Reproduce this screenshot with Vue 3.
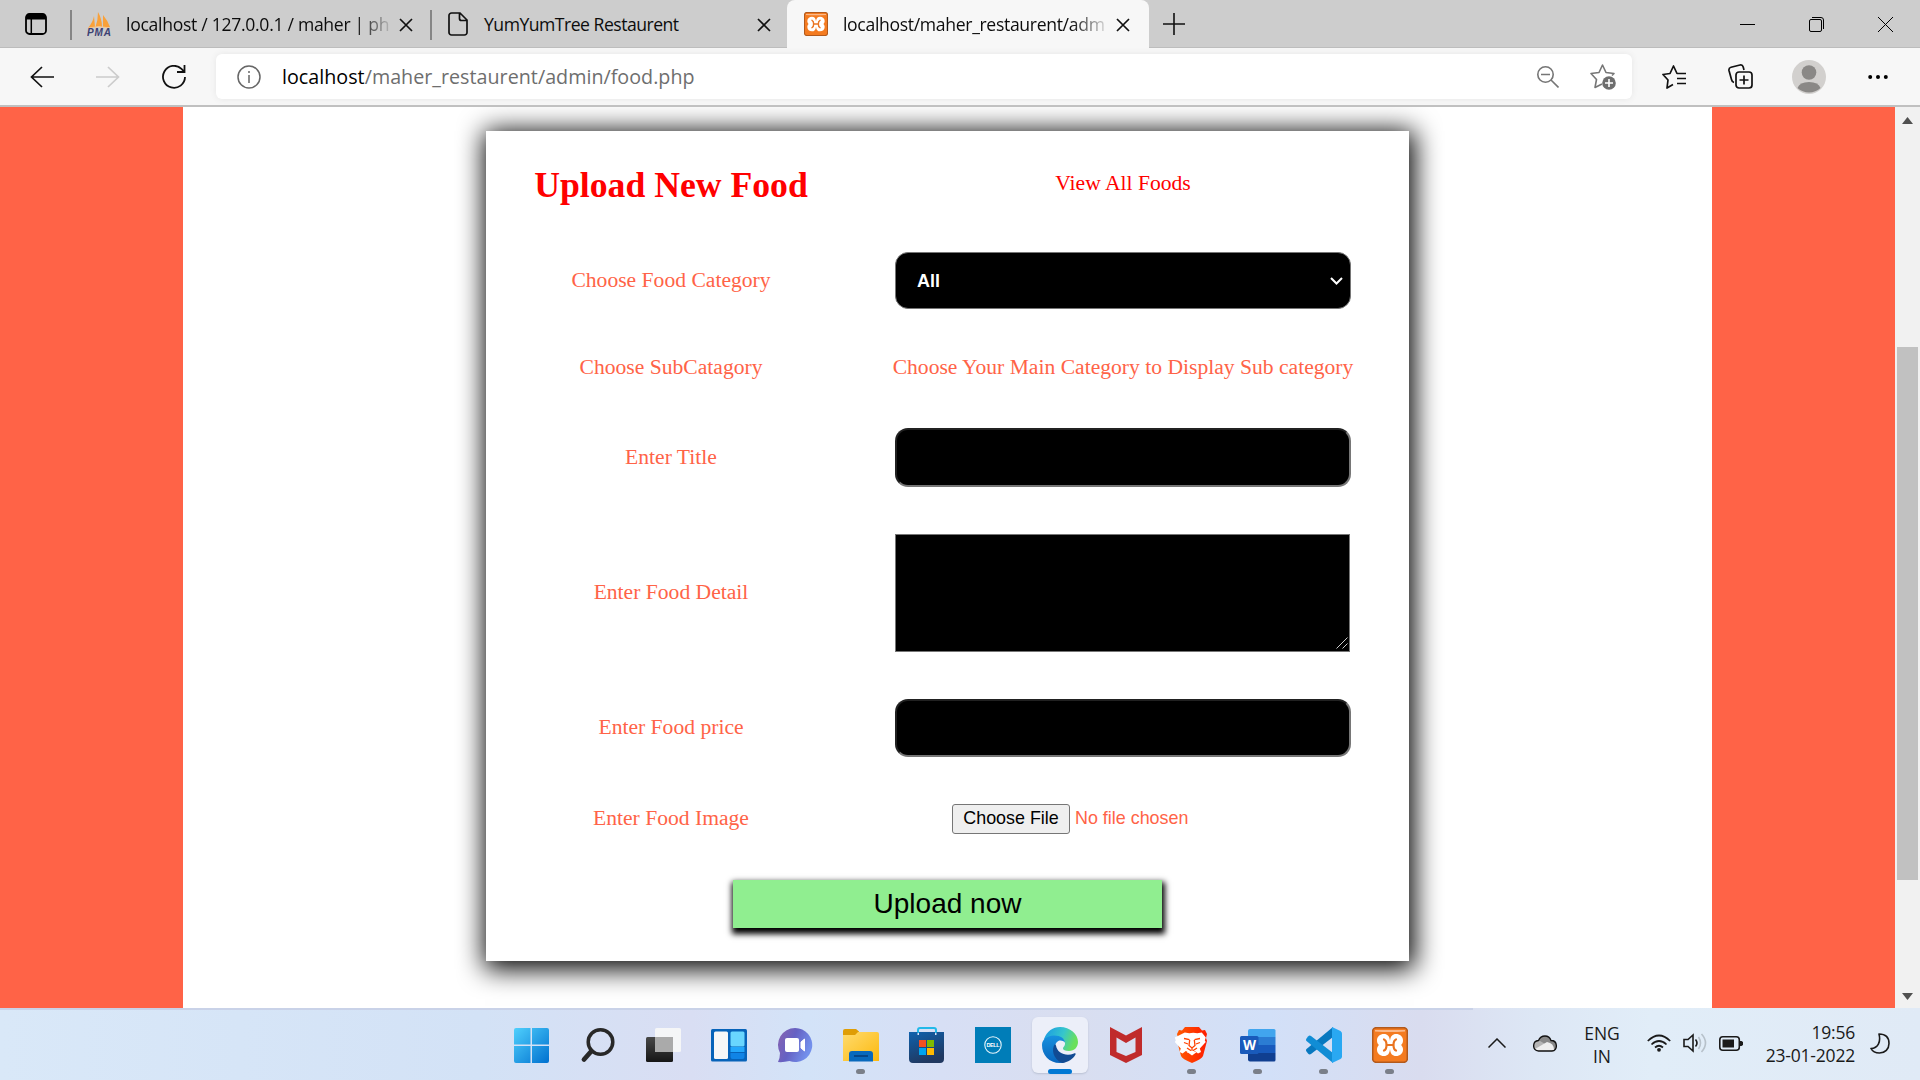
<script setup>
import { h } from 'vue'

const Cross = () => h('svg', { width: 14, height: 14, viewBox: '0 0 14 14', fill: 'none', stroke: '#111', 'stroke-width': 1.7 }, [h('path', { d: 'M1 1l12 12M13 1L1 13' })])

const Xampp = (props) => h('svg', { width: props.size, height: props.size, viewBox: '0 0 36 36' }, [
  h('rect', { x: 0.7, y: 0.7, width: 34.6, height: 34.6, rx: 3.5, fill: '#f47b20', stroke: '#b35a1c', 'stroke-width': 1.6 }),
  h('path', { d: 'M3 3h30v1.5q-15 1-30 0z', fill: '#fbb98a' }),
  h('path', {
    d: 'M18 14C17.500 9 15.500 7 12 7c-4 0-7 2.500-7 6.500 0 2 .8 3.500 2 4.500-1.200 1-2 2.500-2 4.500 0 4 3 6.500 7 6.500 3.500 0 5.500-2 6-7 .5 5 2.500 7 6 7 4 0 7-2.500 7-6.500 0-2-.8-3.500-2-4.500 1.200-1 2-2.500 2-4.500C31 9.500 28 7 24 7c-3.500 0-5.500 2-6 7z',
    fill: '#fff'
  }),
  h('path', { d: 'M12 12.500q2.500 1 2.500 5.500t-2.500 5.500M24 12.500q-2.500 1-2.500 5.500t2.500 5.500M14.500 18h7', fill: 'none', stroke: '#ea7420', 'stroke-width': 2.2, 'stroke-linecap': 'round' })
])
Xampp.props = ['size']
</script>

<template>
  <div class="screen">
    <header class="tabs">
      <div class="tab-menu">
        <svg width="22" height="22" viewBox="0 0 22 22"><rect x="1" y="1" width="20" height="20" rx="3.500" fill="none" stroke="#000" stroke-width="1.800" /><path d="M1 6.500V4a3 3 0 0 1 3-3h14a3 3 0 0 1 3 3v2.500z" /><path d="M6.300 6v15" stroke="#000" stroke-width="1.500" /></svg>
      </div>
      <div class="tab first">
        <svg class="fav" width="24" height="24" viewBox="0 0 24 24"><path d="M1 16Q6 10 7 4l1 11zM8.500 15Q11 8 11 0q4 7 4 15zM16 15V3q5 6 7 12z" fill="#f9a13a" /><path d="M1 16q11-3 22 0" stroke="#f6c58d" fill="none" /><text x="0" y="23.500" textLength="24" class="pma">PMA</text></svg>
        <span class="label pma-label">localhost / 127.0.0.1 / maher | ph</span>
        <Cross class="x" />
      </div>
      <div class="tab second">
        <svg class="fav" width="24" height="24" viewBox="0 0 24 24" fill="none" stroke="#111" stroke-width="1.700"><path d="M5.500 1H14l7 7v12.500a2.500 2.500 0 0 1-2.500 2.500h-13A2.500 2.500 0 0 1 3 20.500v-17A2.500 2.500 0 0 1 5.500 1zM13.500 1v5.500q0 2 2 2H21" /></svg>
        <span class="label yum-label">YumYumTree Restaurent</span>
        <Cross class="x" />
      </div>
      <div class="tab active">
        <Xampp class="fav" :size="24" />
        <span class="label food-label">localhost/maher_restaurent/adm</span>
        <Cross class="x" />
      </div>
      <svg class="plus" width="22" height="22" viewBox="0 0 22 22" stroke="#111" stroke-width="1.600"><path d="M11 0v22M0 11h22" /></svg>
      <div class="window-controls">
        <svg width="15" height="15" viewBox="0 0 15 15" stroke="#000"><path d="M0 7.500h15" /></svg>
        <svg width="15" height="15" viewBox="0 0 15 15" fill="none" stroke="#000"><rect x=".5" y="2.500" width="12" height="12" rx="1.500" /><path d="M3 .5h9a2.500 2.500 0 0 1 2.500 2.500v9" /></svg>
        <svg width="15" height="15" viewBox="0 0 15 15" stroke="#000"><path d="M0 0l15 15M15 0L0 15" /></svg>
      </div>
    </header>

    <nav class="toolbar">
      <div class="nav-buttons">
        <svg width="24" height="24" viewBox="0 0 24 24" fill="none" stroke="#111" stroke-width="1.700"><path d="M12 2L1.500 12 12 22M1.500 12H24" /></svg>
        <svg width="24" height="24" viewBox="0 0 24 24" fill="none" stroke="#ccc" stroke-width="1.700"><path d="M12 2l10.500 10L12 22M22.500 12H0" /></svg>
        <svg width="24" height="24" viewBox="0 0 24 24" fill="none" stroke="#111" stroke-width="1.800"><path d="M23 12a11 11 0 1 1-3.500-8.200L22 6.500M22.500 0v7H15" /></svg>
      </div>
      <div class="address">
        <svg width="24" height="24" viewBox="0 0 24 24" fill="none" stroke="#666" stroke-width="1.500"><circle cx="12" cy="12" r="11" /><path d="M12 10v8M12 6v2" /></svg>
        <span class="url"><b>localhost</b>/maher_restaurent/admin/food.php</span>
        <svg class="zoom" width="22" height="22" viewBox="0 0 22 22" fill="none" stroke="#767676" stroke-width="1.600"><circle cx="8.500" cy="8.500" r="7.700" /><path d="M14 14l7.500 7.500M4 8.500h9" /></svg>
        <svg width="26" height="26" viewBox="0 0 26 26" fill="none" stroke="#767676" stroke-width="1.600" stroke-linejoin="round"><path d="M12 20l-7 3.500 1.500-8L1 9.500l8-1L12.500 1 16 8.500l8 1-2 2" /><circle cx="19" cy="19" r="6.800" fill="#6e6e6e" stroke="none" /><path d="M19 15v8M15 19h8" stroke="#fff" /></svg>
      </div>
      <div class="tools">
        <svg width="24" height="24" viewBox="0 0 24 24" fill="none" stroke="#111" stroke-width="1.700" stroke-linejoin="round"><path d="M11 19.500l-6 3.500 1-8-5-5.500 7-1L11.500 1 15 8.500h9M15 13.500h9M15 18.500h9" /></svg>
        <svg width="25" height="25" viewBox="0 0 25 25" fill="none" stroke="#111" stroke-width="1.700"><path d="M6 18.500q-2-.5-2.500-3L1 6.500q-.5-2.500 2-3.200L12 1q2.500-.5 3.200 2L16 6" /><rect x="8" y="8" width="16" height="16" rx="3" /><path d="M16 11.500v9M11.500 16h9" /></svg>
        <svg class="avatar" width="34" height="34" viewBox="0 0 34 34"><circle cx="17" cy="17" r="17" fill="#d2d0ce" /><circle cx="17" cy="12.500" r="7.300" fill="#8a8886" /><path d="M5.500 28q2-6 11.500-6t11.500 6A17 17 0 0 1 5.500 28z" fill="#8a8886" /></svg>
        <svg width="20" height="6" viewBox="0 0 20 6"><circle cx="2.200" cy="3" r="2" /><circle cx="10" cy="3" r="2" /><circle cx="17.800" cy="3" r="2" /></svg>
      </div>
    </nav>

    <main class="viewport">
      <div class="page">
        <form class="card" @submit.prevent>
          <div class="row head"><h1>Upload New Food</h1><a class="view">View All Foods</a></div>
          <div class="row category">
            <label>Choose Food Category</label>
            <div class="field"><div class="select"><span>All</span><svg width="13" height="8" viewBox="0 0 13 8" fill="none" stroke="#fff" stroke-width="2"><path d="M1 1l5.500 5.500L12 1" /></svg></div></div>
          </div>
          <div class="row sub"><label>Choose SubCatagory</label><span class="hint">Choose Your Main Category to Display Sub category</span></div>
          <div class="row title"><label>Enter Title</label><div class="field"><input type="text" /></div></div>
          <div class="row detail">
            <label>Enter Food Detail</label>
            <div class="field area"><textarea></textarea><svg class="grip" width="12" height="12" viewBox="0 0 12 12" stroke="#ccc"><path d="M.5 11.500l11-11M6.500 11.500l5-5" /></svg></div>
          </div>
          <div class="row price"><label>Enter Food price</label><div class="field"><input type="text" /></div></div>
          <div class="row image"><label>Enter Food Image</label><div class="file"><button type="button">Choose File</button><span>No file chosen</span></div></div>
          <div class="row submit"><button type="submit">Upload now</button></div>
        </form>
      </div>
      <div class="scrollbar">
        <svg width="11" height="7" viewBox="0 0 11 7"><path d="M5.500 0L11 7H0z" fill="#505050" /></svg>
        <div class="thumb"></div>
        <svg width="11" height="7" viewBox="0 0 11 7"><path d="M0 0h11L5.500 7z" fill="#505050" /></svg>
      </div>
    </main>

    <footer class="taskbar">
      <svg width="0" height="0" class="defs">
        <defs>
          <linearGradient id="win" x1="0" y1="0" x2="1" y2="1"><stop offset="0" stop-color="#4fd0fd" /><stop offset="1" stop-color="#0070cf" /></linearGradient>
          <linearGradient id="dark" x1="0" y1="0" x2="0" y2="1"><stop offset="0" stop-color="#484848" /><stop offset="1" stop-color="#161616" /></linearGradient>
          <linearGradient id="chat" x1="0" y1="0" x2="1" y2="0.400"><stop offset="0" stop-color="#8a63b0" /><stop offset="0.500" stop-color="#6561c3" /><stop offset="1" stop-color="#7390ec" /></linearGradient>
          <linearGradient id="folder" x1="0" y1="0" x2="1" y2="1"><stop offset="0" stop-color="#ffdb6e" /><stop offset="1" stop-color="#fcb90f" /></linearGradient>
          <linearGradient id="store" x1="0" y1="0" x2="0.400" y2="1"><stop offset="0" stop-color="#0f62ae" /><stop offset="1" stop-color="#203860" /></linearGradient>
          <linearGradient id="edgeTop" x1="0" y1="0" x2="1" y2="0.300"><stop offset="0.100" stop-color="#1d9fe2" /><stop offset="0.600" stop-color="#36c6cc" /><stop offset="1" stop-color="#6ae05b" /></linearGradient>
          <linearGradient id="edgeLeft" x1="0" y1="0" x2="0" y2="1"><stop offset="0" stop-color="#1791df" /><stop offset="1" stop-color="#0865bd" /></linearGradient>
          <linearGradient id="brave" x1="0" y1="0" x2="1" y2="0"><stop offset="0" stop-color="#ff5a00" /><stop offset="1" stop-color="#ff1c00" /></linearGradient>
        </defs>
      </svg>
      <div class="apps">
        <div class="app"><svg viewBox="0 0 36 36"><path d="M3 1h14.500v16.500H1V3q0-2 2-2zM19 1h15q2 0 2 2v14.500H19zM1 19h16.500v17H3q-2 0-2-2zM19 19h17v15q0 2-2 2H19z" fill="url(#win)" /></svg></div>
        <div class="app"><svg viewBox="0 0 36 36" fill="none" stroke="#282828"><circle cx="21.500" cy="15" r="12.300" stroke-width="3.500" /><path d="M12.500 24l-7.500 8.500" stroke-width="4.800" stroke-linecap="round" /></svg></div>
        <div class="app"><svg viewBox="0 0 36 36"><rect x="1" y="10" width="27" height="25" rx="1.500" fill="url(#dark)" /><rect x="10" y="1" width="26" height="24" rx="1.500" fill="#f7f7f7" opacity=".92" /><path d="M10 10h18v15H10z" fill="#aaa" /></svg></div>
        <div class="app"><svg viewBox="0 0 36 36"><rect y="2" width="36" height="32.500" rx="1.500" fill="#0763b9" /><rect x="3" y="4.500" width="14" height="27.500" rx="1.500" fill="#f7f7f7" /><rect x="19.500" y="4.500" width="14" height="15" rx="1.500" fill="#69d6fe" /><path d="M19.500 20h14v5h-14z" fill="#23a7fb" /><path d="M19.500 26h14v4q0 2-2 2h-10q-2 0-2-2z" fill="#1084e6" /></svg></div>
        <div class="app"><svg viewBox="0 0 36 36"><path d="M18 1a17 17 0 1 1-5.500 33Q6 35.500 1 35q2-4 2-9A17 17 0 0 1 18 1z" fill="url(#chat)" /><rect x="8" y="11" width="14" height="14" rx="2" fill="#fff" /><path d="M24 15l3.500-3v12L24 21z" fill="#fff" stroke="#fff" /></svg></div>
        <div class="app open"><svg viewBox="0 0 36 36"><path d="M2 2h11l3 2.500V9H0V4q0-2 2-2z" fill="#df9d05" /><path d="M0 8h12l3-3h19q2 0 2 2v27H0z" fill="url(#folder)" /><path d="M6 34.500V27q0-3 3-3h18q3 0 3 3v7.500z" fill="#0869bd" /><path d="M11 29h14" stroke="#063e7c" stroke-width="1.600" /></svg></div>
        <div class="app"><svg viewBox="0 0 36 36"><path d="M9 6V3q0-2 2-2h14q2 0 2 2v3" fill="none" stroke="#22b9e9" stroke-width="2" /><path d="M0 5h8.500v3h1.500V5h16v3h1.500V5H35v27q0 4-4 4H4q-4 0-4-4z" fill="url(#store)" /><path d="M10 13h7v7h-7z" fill="#f25022" /><path d="M18 13h7v7h-7z" fill="#7fba00" /><path d="M10 21h7v7h-7z" fill="#00a4ef" /><path d="M18 21h7v7h-7z" fill="#ffb900" /></svg></div>
        <div class="app"><svg viewBox="0 0 36 36"><path d="M0 0h36v36H0z" fill="#007db8" /><circle cx="18" cy="18" r="8.200" fill="none" stroke="#e6f5fb" stroke-width="1.100" /><text x="11.500" y="20" textLength="13" class="dell">DELL</text></svg></div>
        <div class="app current"><svg viewBox="0 0 36 36"><path d="M2 12C5 4 11 0 18 0c10 0 18 7 18 15 0 5-3.500 9-9 9-4 0-6-1-6-2.500s2-2 2-5C23 13 20 10 15 10c-6 0-10 3-13 2z" fill="url(#edgeTop)" /><path d="M18 36C7 36 0 28 0 18 0 12 6 8.500 12 8.500c7 0 10.500 3 11 7-2-2.500-6.500-3-8.500 0C10 22 14 33 24 34.500Q21 36 18 36z" fill="url(#edgeLeft)" /><path d="M13 17c-4 5-2 15 7 19 6-.5 11-4 13.500-8.500.5-1-.5-1.500-1.500-1-8 3.500-17-.5-18-8z" fill="#114b93" /></svg></div>
        <div class="app"><svg viewBox="0 0 36 36"><path d="M2 0l16 8.500L34 0v28L18 36 2 28z" fill="#c02b2b" /><path d="M8.500 10.500L18 16l9.500-5.500V25L18 29l-9.500-4z" fill="#d9e0f2" /></svg></div>
        <div class="app open"><svg viewBox="0 0 36 36"><path d="M11 0h14l3 3.500 3-.5 2 4-1 4 1 3-4 15q-1 3-11 7-10-4-11-7L3 14l1-3-1-4 2-4 3 .5z" fill="url(#brave)" /><path d="M9.500 5.500l4.500.8 4-.6 4 .6 4.500-.8 4 5-1 3 1 1.500-6 6.500 1.200 3.500-3 1.500-3.200-2.500-1.500.8v1.200l-1.500-.7h-3l-1.500.7v-1.200l-1.500-.8-3.200 2.500-3-1.500 1.200-3.500-6-6.500 1-1.500-1-3z" transform="translate(1.300 0)" fill="#fff" /><path d="M10 11.500l5.500 1.200M26 11.500l-5.500 1.200M10 15.500l4 1.500M26 15.500l-4 1.500M15.700 13l-.7 5.500 3 2.500 3-2.500-.7-5.500M18 21v2M13 21l5 3.200 5-3.200" stroke="#ff4200" stroke-width="1.300" fill="none" /><path d="M13.500 25.200l4.500-1.700 4.500 1.700L18 28.500z" fill="#fff" /></svg></div>
        <div class="app open"><svg viewBox="0 0 36 36"><path d="M10 2h24q1.500 0 1.500 1.500V10H8V4q0-2 2-2z" fill="#41a5ee" /><path d="M8 10h27.500v8H8z" fill="#2b7cd3" /><path d="M8 18h27.500v8H8z" fill="#185abd" /><path d="M8 26h27.500v7q0 1.500-1.500 1.500H10q-2 0-2-2z" fill="#103f91" /><rect y="9" width="18.500" height="18" rx="1.500" fill="#195abb" /><text x="3" y="22.800" textLength="12.500" class="word">W</text></svg></div>
        <div class="app open"><svg viewBox="0 0 36 36"><path d="M27 0v10L5 27q-1.500 1-3-.5l-1.500-2q-1-1.500 0-2.500z" fill="#0878bf" /><path d="M27 36V26L5 9Q3.500 8 2 9.500l-1.500 2q-1 1.500 0 2.500z" fill="#118dd5" /><path d="M26 0l8.500 4Q36 5 36 6.500v23q0 1.500-1.500 2.500L26 36z" fill="#29a8f2" /></svg></div>
        <div class="app open"><Xampp :size="36" /></div>
      </div>
      <div class="tray">
        <svg class="chev" width="18" height="10" viewBox="0 0 18 10" fill="none" stroke="#1a1a1a" stroke-width="1.500"><path d="M.5 9.500L9 1l8.500 8.500" /></svg>
        <svg class="cloud" width="24" height="17" viewBox="0 0 24 17"><path d="M5.500 5.500C8-.5 16-.5 18 5.500c7 0 7 10.500 1 10.500H5.500C-1 16-1 6 5.500 5.500z" fill="#888" /><path d="M1 10q1-5 6-4l14 8q-1 2-3 2H5.500q-4-.5-4.500-6z" fill="#b5b5b5" /><path d="M2 14l12-7q7 1 7 8l-3 1H5.500z" fill="#eee" /><path d="M5.500 5.500C8-.5 16-.5 18 5.500c7 0 7 10.500 1 10.500H5.500C-1 16-1 6 5.500 5.500z" fill="none" stroke="#111" stroke-width="1.300" /></svg>
        <div class="lang"><span>ENG</span><span>IN</span></div>
        <svg class="wifi" width="24" height="18" viewBox="0 0 24 18" fill="none" stroke="#1a1a1a" stroke-width="1.700"><path d="M.8 7q11.200-11 22.400 0M4.500 10.500q7.500-7 15 0M8 13.500q4-3.500 8 0" /><circle cx="12" cy="15.800" r="1.900" fill="#1a1a1a" stroke="none" /></svg>
        <svg class="sound" width="24" height="20" viewBox="0 0 24 20" fill="none" stroke="#1a1a1a" stroke-width="1.600"><path d="M1 6.500h4L10 2v16l-5-4.500H1zM12.500 6.500q3 3.500 0 7" /><path d="M15.500 4q4 6 0 12M18.500 1q8 9 0 18" stroke="#b7c1ca" /></svg>
        <svg class="battery" width="24" height="15" viewBox="0 0 24 15"><rect x=".8" y=".8" width="19.500" height="13.400" rx="3" fill="none" stroke="#1a1a1a" stroke-width="1.600" /><path d="M3.500 3.500h11.500v8H3.500zM21 5h1.500l1.500 1v3l-1.500 1H21z" fill="#1a1a1a" /></svg>
        <div class="clock"><span class="time">19:56</span><span class="date">23-01-2022</span></div>
        <svg class="moon" width="20" height="21" viewBox="0 0 20 21" fill="none" stroke="#1a1a1a" stroke-width="1.600" stroke-linejoin="round"><path d="M9 1c7 0 10 4 10 9.500C19 16 15 20 9.500 20 6 20 2.500 18.500 1 15.500 8 15 11 9 9 1z" /></svg>
      </div>
    </footer>
  </div>
</template>

<style>
body { margin: 0; overflow: hidden; }
</style>

<style scoped>
* { box-sizing: border-box; }
svg { display: block; flex: none; }
.screen { width: 1920px; height: 1080px; display: flex; flex-direction: column; overflow: hidden; font-family: "Open Sans", "Noto Sans", sans-serif; }
.tabs { height: 48px; flex: none; background: #cdcdcd; display: flex; align-items: center; box-shadow: inset 0 -1px #bcbcbc; }
.tab-menu { width: 70px; padding-left: 25px; }
.tab { height: 48px; display: flex; align-items: center; position: relative; }
.tab .x { margin-left: auto; margin-top: 2px; }
.label { font-size: 17.600px; line-height: 28px; white-space: nowrap; color: #0c0c0c; padding-bottom: 1px; }
.first { width: 360px; padding: 0 17px 0 17px; }
.second { width: 357px; padding: 0 16px 0 16px; }
.first::before, .second::before { content: ''; position: absolute; left: 0; top: 10px; width: 1.500px; height: 30px; background: #858585; }
.active { width: 362px; padding: 0 19px 0 17px; background: #f7f7f7; border-radius: 8px 8px 0 0; }
.pma { font: italic bold 10px "Liberation Sans", sans-serif; fill: #3c4172; }
.pma-label { margin-left: 15px; letter-spacing: -.3px; -webkit-mask-image: linear-gradient(90deg, #000 232px, transparent 268px); mask-image: linear-gradient(90deg, #000 232px, transparent 268px); }
.yum-label { margin-left: 14px; letter-spacing: -.5px; }
.food-label { margin-left: 15px; letter-spacing: -.33px; -webkit-mask-image: linear-gradient(90deg, #000 228px, transparent 268px); mask-image: linear-gradient(90deg, #000 228px, transparent 268px); }
.plus { margin-left: 14px; }
.window-controls { display: flex; gap: 54px; margin-left: auto; margin-right: 27px; }
.toolbar { height: 59px; flex: none; background: #f7f7f7; border-bottom: 2px solid #c0c0c0; display: flex; align-items: center; }
.nav-buttons { display: flex; gap: 42px; padding-left: 30px; width: 216px; }
.address { width: 1416px; height: 45px; border-radius: 6px; background: #fff; box-shadow: 0 0 6px #e6e6e6; display: flex; align-items: center; padding: 0 16px 0 21px; }
.url { margin-left: 21px; font-size: 19.700px; letter-spacing: 0; color: #6e6e6e; white-space: nowrap; letter-spacing: .02px; }
.url b { font-weight: 400; color: #000; }
.zoom { margin-left: auto; margin-right: 31px; }
.tools { display: flex; align-items: center; padding-left: 30px; }
.tools svg:nth-child(2) { margin-left: 42px; }
.tools .avatar { margin: 0 42px 0 39px; }
.viewport { height: 901px; flex: none; display: flex; background: tomato; }
.page { margin-left: 183px; width: 1529px; background: #fff; padding: 24px 0 0 303px; overflow: hidden; }
.scrollbar { margin-left: auto; width: 25px; background: #f1f1f1; display: flex; flex-direction: column; align-items: center; padding: 10px 0 8px; }
.thumb { width: 21px; height: 533px; margin: 223px 0 auto; background: #c1c1c1; }
.card { width: 923px; height: 830px; background: #fff; box-shadow: 1.500px 4px 25px 4px #000; font-family: "Liberation Serif", serif; font-size: 21.600px; color: tomato; }
.row { display: grid; grid-template-columns: 370px 534px; align-items: center; justify-items: center; white-space: nowrap; }
label, .hint, .view { padding-bottom: 1px; }
.head { height: 106px; color: red; }
h1 { margin: 2px 0 0; font-size: 35.700px; line-height: 42px; }
.category { height: 87px; }
.sub { height: 88px; }
.title { height: 91px; }
.detail { height: 180px; }
.detail label, .image label { padding-bottom: 2px; }
.price { height: 90px; }
.image { height: 92px; }
.submit { height: 78px; display: flex; justify-content: center; }
.field { width: 456px; }
.select { height: 57px; background: #000; border: 1px solid #767676; border-radius: 13px; color: #fff; font: bold 18px "Liberation Sans", sans-serif; display: flex; align-items: center; justify-content: space-between; padding: 0 7px 0 21px; }
.select span { padding-top: 1px; }
input { display: block; width: 456px; height: 59px; background: #000; border: 2px inset #767676; border-radius: 13px; color: #fff; padding: 0 20px; }
.price input { height: 58px; }
.area { position: relative; }
textarea { display: block; width: 455px; height: 118px; resize: none; background: #000; border: 1px solid #767676; color: #fff; }
.grip { position: absolute; right: 3px; bottom: 3px; }
.file { display: flex; align-items: center; gap: 5px; width: 342px; font: 17.900px "Liberation Sans", sans-serif; }
.file button { width: 118px; height: 30px; padding: 0 0 2px; font: inherit; color: #000; background: #efefef; border: 1px solid #767676; border-radius: 3px; }
.file span { padding-bottom: 2px; }
.submit button { width: 429px; height: 48px; border: 0; padding: 0; background: #90ee90; color: #000; font: 28px "Liberation Sans", sans-serif; box-shadow: 1px 4px 6px 2px #000; }
.taskbar { position: relative; height: 72px; flex: none; display: flex; background: linear-gradient(90deg, #d9e8f8 0, #d3e2f6 25%, #d9def3 36%, #d3e3f8 42%, #d7dff5 49%, #d9def0 56%, #d2e0f8 66%, #d9dcef 74%, #dde7f5 80%, #e1edf8 86%, #e0eaf6 100%); color: #1a1a1a; }
.taskbar::before { content: ''; position: absolute; left: 0; top: 0; width: 1473px; height: 2px; background: #c9d2e8; }
.defs { position: absolute; }
.apps { display: flex; padding-left: 498px; width: 1488px; }
.app { width: 66.070px; height: 72px; position: relative; display: flex; justify-content: center; padding-top: 19px; }
.app > svg { width: 36px; height: 36px; position: relative; }
.app.open::after { content: ''; position: absolute; top: 61px; left: 28px; width: 9px; height: 5px; border-radius: 3px; background: #7a7f89; }
.current::before { content: ''; position: absolute; left: 5px; top: 9px; width: 56px; height: 56px; border-radius: 6px; background: #eceff9; box-shadow: 0 1px 2px #b9c0d2; }
.current::after { content: ''; position: absolute; left: 21px; top: 61px; width: 24px; height: 5px; border-radius: 3px; background: #0078d4; }
.dell { font: bold 5.500px "Liberation Sans", sans-serif; fill: #fff; }
.word { font: bold 13.500px "Open Sans", sans-serif; fill: #fff; }
.tray { display: flex; align-items: center; height: 70px; font-size: 17.500px; line-height: 23px; }
.cloud { margin-left: 27px; }
.lang { display: flex; flex-direction: column; align-items: center; width: 50px; margin: 3px 0 0 20px; }
.wifi { margin-left: 20px; }
.sound { margin-left: 12px; }
.battery { margin-left: 12px; }
.clock { display: flex; flex-direction: column; align-items: flex-end; width: 112px; margin-top: 1px; letter-spacing: -.2px; }
.moon { margin-left: 15px; }
</style>
